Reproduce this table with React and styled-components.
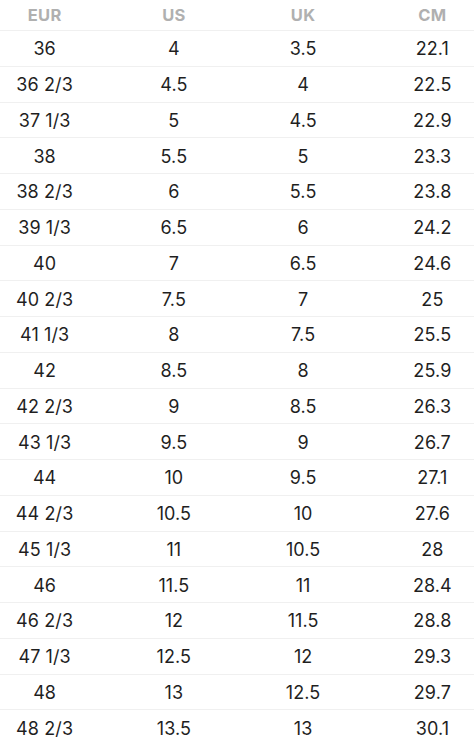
import React from 'react'
import styled, { createGlobalStyle } from 'styled-components'

const GlobalStyle = createGlobalStyle`
  html, body {
    margin: 0;
    padding: 0;
    background: #fff;
    overflow: hidden;
  }
  body {
    font-family: Inter, 'Liberation Sans', sans-serif;
  }
`

const Table = styled.div`
  width: 517px;
  margin-left: -20px;
`

const Row = styled.div`
  display: grid;
  grid-template-columns: repeat(4, 1fr);
  align-items: center;
  height: ${props => (props.head ? '30px' : '35.75px')};
  box-sizing: border-box;
  border-top: ${props => (props.head ? 'none' : '1.5px solid #f0f0f0')};
`

const Cell = styled.div`
  text-align: center;
  font-size: ${props => (props.head ? '16.5px' : '18px')};
  font-weight: ${props => (props.head ? 700 : 400)};
  color: ${props => (props.head ? '#b0b0b0' : '#1f1f1f')};
  letter-spacing: ${props => (props.head ? '0.3px' : '0.1px')};
  padding-top: ${props => (props.head ? '0' : '1px')};
`

const sizes = [
  ['36', '4', '3.5', '22.1'],
  ['36 2/3', '4.5', '4', '22.5'],
  ['37 1/3', '5', '4.5', '22.9'],
  ['38', '5.5', '5', '23.3'],
  ['38 2/3', '6', '5.5', '23.8'],
  ['39 1/3', '6.5', '6', '24.2'],
  ['40', '7', '6.5', '24.6'],
  ['40 2/3', '7.5', '7', '25'],
  ['41 1/3', '8', '7.5', '25.5'],
  ['42', '8.5', '8', '25.9'],
  ['42 2/3', '9', '8.5', '26.3'],
  ['43 1/3', '9.5', '9', '26.7'],
  ['44', '10', '9.5', '27.1'],
  ['44 2/3', '10.5', '10', '27.6'],
  ['45 1/3', '11', '10.5', '28'],
  ['46', '11.5', '11', '28.4'],
  ['46 2/3', '12', '11.5', '28.8'],
  ['47 1/3', '12.5', '12', '29.3'],
  ['48', '13', '12.5', '29.7'],
  ['48 2/3', '13.5', '13', '30.1']
]

const App = () => (
  <>
    <GlobalStyle />
    <Table>
      <Row head>
        {['EUR', 'US', 'UK', 'CM'].map(label => (
          <Cell head key={label}>
            {label}
          </Cell>
        ))}
      </Row>
      {sizes.map(row => (
        <Row key={row[0]}>
          {row.map((value, i) => (
            <Cell key={i}>{value}</Cell>
          ))}
        </Row>
      ))}
    </Table>
  </>
)

export default App
